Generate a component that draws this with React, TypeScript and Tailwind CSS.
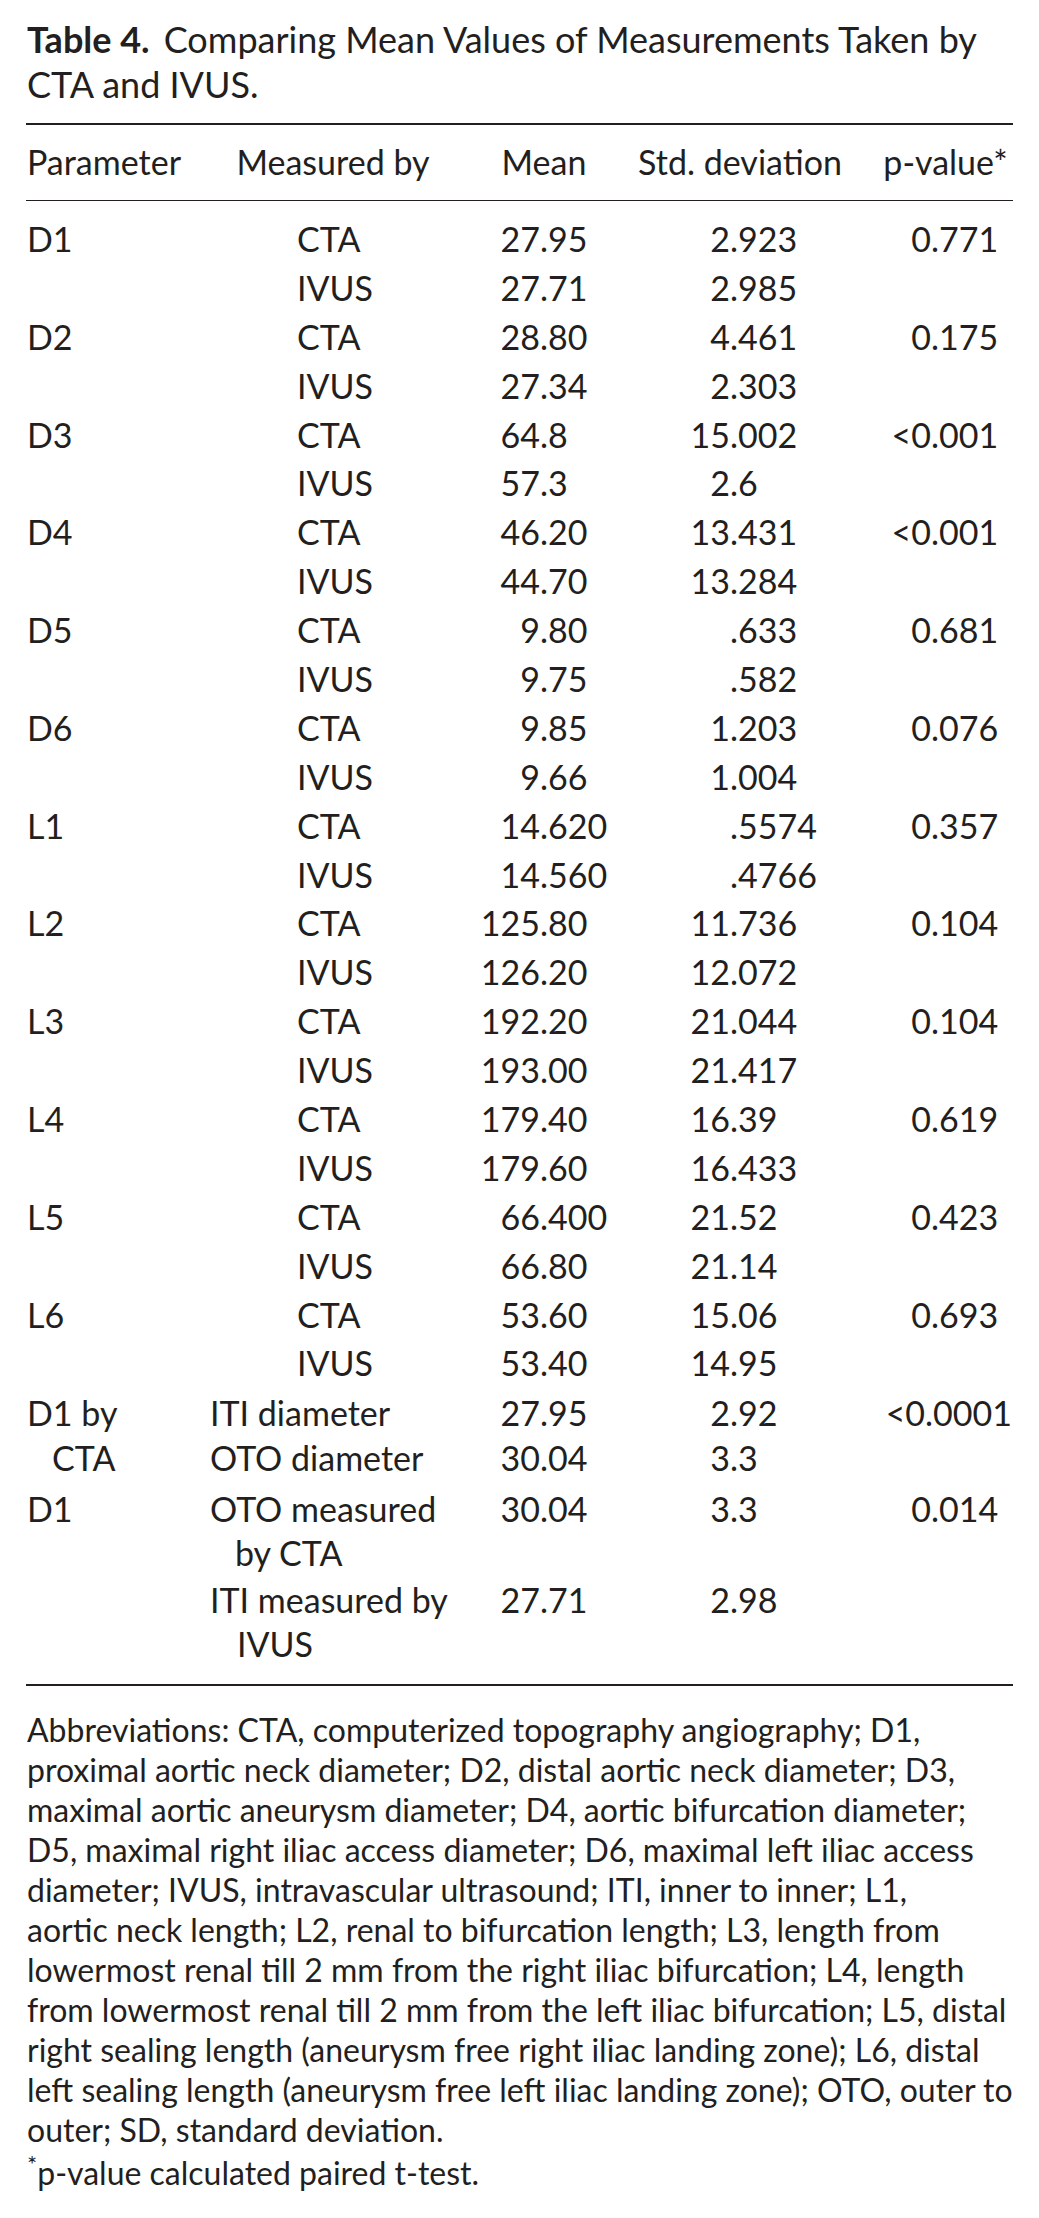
import React from "react";

type Sub = { by: React.ReactNode; mean: string; sd: string; p: string; cls?: string };
type Group = { label: React.ReactNode; subs: Sub[]; cls?: string };

function Num({ v, w, intW }: { v: string; w: string; intW: string }) {
  if (!v) return <div className={w} />;
  const i = v.indexOf(".");
  const a = i >= 0 ? v.slice(0, i) : v;
  const b = i >= 0 ? v.slice(i) : "";
  return (
    <div className={`${w} flex`}>
      <span className={`${intW} text-right whitespace-nowrap`}>{a}</span>
      <span className="whitespace-nowrap">{b}</span>
    </div>
  );
}

const std = "pb-[4.9px]";

const pair = (
  label: string,
  c: [string, string, string],
  v: [string, string]
): Group => ({
  label,
  subs: [
    { by: <span className="pl-[87px]">CTA</span>, mean: c[0], sd: c[1], p: c[2], cls: std },
    { by: <span className="pl-[87px]">IVUS</span>, mean: v[0], sd: v[1], p: "", cls: std },
  ],
});

const groups: Group[] = [
  pair("D1", ["27.95", "2.923", "0.771"], ["27.71", "2.985"]),
  pair("D2", ["28.80", "4.461", "0.175"], ["27.34", "2.303"]),
  pair("D3", ["64.8", "15.002", "<0.001"], ["57.3", "2.6"]),
  pair("D4", ["46.20", "13.431", "<0.001"], ["44.70", "13.284"]),
  pair("D5", ["9.80", ".633", "0.681"], ["9.75", ".582"]),
  pair("D6", ["9.85", "1.203", "0.076"], ["9.66", "1.004"]),
  pair("L1", ["14.620", ".5574", "0.357"], ["14.560", ".4766"]),
  pair("L2", ["125.80", "11.736", "0.104"], ["126.20", "12.072"]),
  pair("L3", ["192.20", "21.044", "0.104"], ["193.00", "21.417"]),
  pair("L4", ["179.40", "16.39", "0.619"], ["179.60", "16.433"]),
  pair("L5", ["66.400", "21.52", "0.423"], ["66.80", "21.14"]),
  pair("L6", ["53.60", "15.06", "0.693"], ["53.40", "14.95"]),
  {
    label: (
      <div className="leading-[45px]">
        <div>D1 by</div>
        <div className="pl-[25px]">CTA</div>
      </div>
    ),
    subs: [
      { by: "ITI diameter", mean: "27.95", sd: "2.92", p: "<0.0001", cls: "leading-[45px]" },
      { by: "OTO diameter", mean: "30.04", sd: "3.3", p: "", cls: "leading-[45px]" },
    ],
  },
  {
    label: "D1",
    cls: "pt-[7px]",
    subs: [
      {
        by: (
          <div>
            <div>OTO measured</div>
            <div className="pl-[25px]">by CTA</div>
          </div>
        ),
        mean: "30.04",
        sd: "3.3",
        p: "0.014",
        cls: "pb-[3px]",
      },
      {
        by: (
          <div>
            <div>ITI measured by</div>
            <div className="pl-[27px]">IVUS</div>
          </div>
        ),
        mean: "27.71",
        sd: "2.98",
        p: "",
      },
    ],
  },
];

const notes = [
  "Abbreviations: CTA, computerized topography angiography; D1,",
  "proximal aortic neck diameter; D2, distal aortic neck diameter; D3,",
  "maximal aortic aneurysm diameter; D4, aortic bifurcation diameter;",
  "D5, maximal right iliac access diameter; D6, maximal left iliac access",
  "diameter; IVUS, intravascular ultrasound; ITI, inner to inner; L1,",
  "aortic neck length; L2, renal to bifurcation length; L3, length from",
  "lowermost renal till 2 mm from the right iliac bifurcation; L4, length",
  "from lowermost renal till 2 mm from the left iliac bifurcation; L5, distal",
  "right sealing length (aneurysm free right iliac landing zone); L6, distal",
  "left sealing length (aneurysm free left iliac landing zone); OTO, outer to",
  "outer; SD, standard deviation.",
];

export default function App() {
  return (
    <div className="min-h-[2218px] w-[1039px] bg-white px-[27px] text-[#231f20] font-['Lato',sans-serif]">
      <h1 className="pt-[17px] text-[36px] leading-[45px] font-normal whitespace-nowrap">
        <span className="font-bold mr-[14px]">Table 4.</span>
        Comparing Mean Values of Measurements Taken by
        <br />
        CTA and IVUS.
      </h1>

      <div className="mt-[16px] -mx-px h-[2px] bg-[#231f20]" />

      <div className="flex pt-[15px] pb-[16px] text-[34px] leading-[44px] whitespace-nowrap">
        <div className="w-[183px]">Parameter</div>
        <div className="w-[246px] text-center">Measured by</div>
        <div className="w-[164px] pl-[12px] text-center">Mean</div>
        <div className="w-[240px] text-center">Std. deviation</div>
        <div className="w-[152px] pl-[19px] text-center">p-value*</div>
      </div>

      <div className="-mx-px h-px bg-[#231f20]" />

      <div className="pt-[16px] text-[34px] leading-[44px]">
        {groups.map((g, gi) => (
          <div key={gi} className={`flex ${g.cls ?? ""}`}>
            <div className="w-[183px] whitespace-nowrap">{g.label}</div>
            <div className="flex flex-col">
              {g.subs.map((s, si) => (
                <div key={si} className={`flex ${s.cls ?? ""}`}>
                  <div className="w-[246px] whitespace-nowrap">{s.by}</div>
                  <Num v={s.mean} w="w-[164px]" intW="w-[84px]" />
                  <Num v={s.sd} w="w-[240px]" intW="w-[110px]" />
                  <Num v={s.p} w="w-[152px]" intW="w-[71px]" />
                </div>
              ))}
            </div>
          </div>
        ))}
      </div>

      <div className="mt-[18px] -mx-px h-[2px] bg-[#231f20]" />

      <div className="pt-[24px] text-[32px] leading-[40px]">
        {notes.map((n, i) => (
          <div key={i} className="whitespace-nowrap">
            {n}
          </div>
        ))}
        <div className="mt-[3px] whitespace-nowrap">
          <sup className="text-[24px]">*</sup>p-value calculated paired t-test.
        </div>
      </div>
    </div>
  );
}
